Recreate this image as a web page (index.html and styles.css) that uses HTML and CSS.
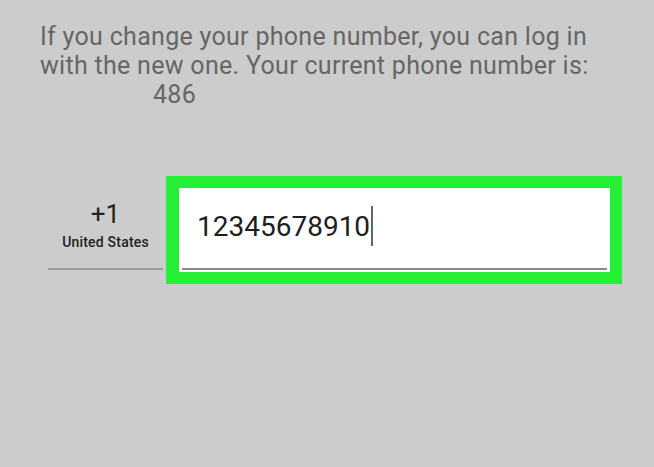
FILE: index.html
```html
<!DOCTYPE html>
<html lang="en">
<head>
    <meta charset="UTF-8">
    <meta name="viewport" content="width=device-width, initial-scale=1.0">
    <title>Change phone number</title>
    <link rel="stylesheet" href="styles.css">
</head>
<body>
    <div class="intro">
        <p>If you change your phone number, you can log in with the new one. Your current phone number is:</p>
        <p class="current-number">486</p>
    </div>

    <div class="phone-row">
        <div class="country">
            <div class="country-code">+1</div>
            <div class="country-name">United States</div>
        </div>

        <div class="number-box">
            <div class="number-field">12345678910<span class="caret"></span></div>
        </div>
    </div>
</body>
</html>
```

FILE: styles.css
```css
* {
    margin: 0;
    padding: 0;
    box-sizing: border-box;
}

body {
    font-family: Roboto, 'Noto Sans', sans-serif;
    background: #cccccc;
    width: 654px;
    height: 467px;
    overflow: hidden;
}

.intro {
    padding: 22px 40px 0 40px;
    color: #666666;
    font-size: 25px;
    letter-spacing: 0.3px;
    line-height: 29px;
}

.current-number {
    padding-left: 113px;
}

.phone-row {
    display: flex;
    align-items: flex-start;
    margin-top: 67px;
}

.country {
    width: 115px;
    height: 94px;
    margin-left: 48px;
    padding-top: 23px;
    border-bottom: 2px solid #9c9c9c;
    text-align: center;
    color: #222222;
}

.country-code {
    font-size: 26px;
    line-height: 30px;
}

.country-name {
    margin-top: 5px;
    font-size: 14px;
    font-weight: 500;
    letter-spacing: 0.2px;
    line-height: 16px;
}

.number-box {
    width: 456px;
    height: 108px;
    margin-left: 3px;
    border: 12px solid #26f036;
    border-left-width: 13px;
    background: #ffffff;
}

.number-field {
    height: 82px;
    margin: 0 3px;
    padding: 18px 0 0 15px;
    border-bottom: 2px solid #8a8a8a;
    color: #1e1e1e;
    font-size: 28px;
    line-height: 32px;
}

.caret {
    display: inline-block;
    width: 2px;
    height: 40px;
    margin-left: 1px;
    vertical-align: -10px;
    background: #666666;
}
```
